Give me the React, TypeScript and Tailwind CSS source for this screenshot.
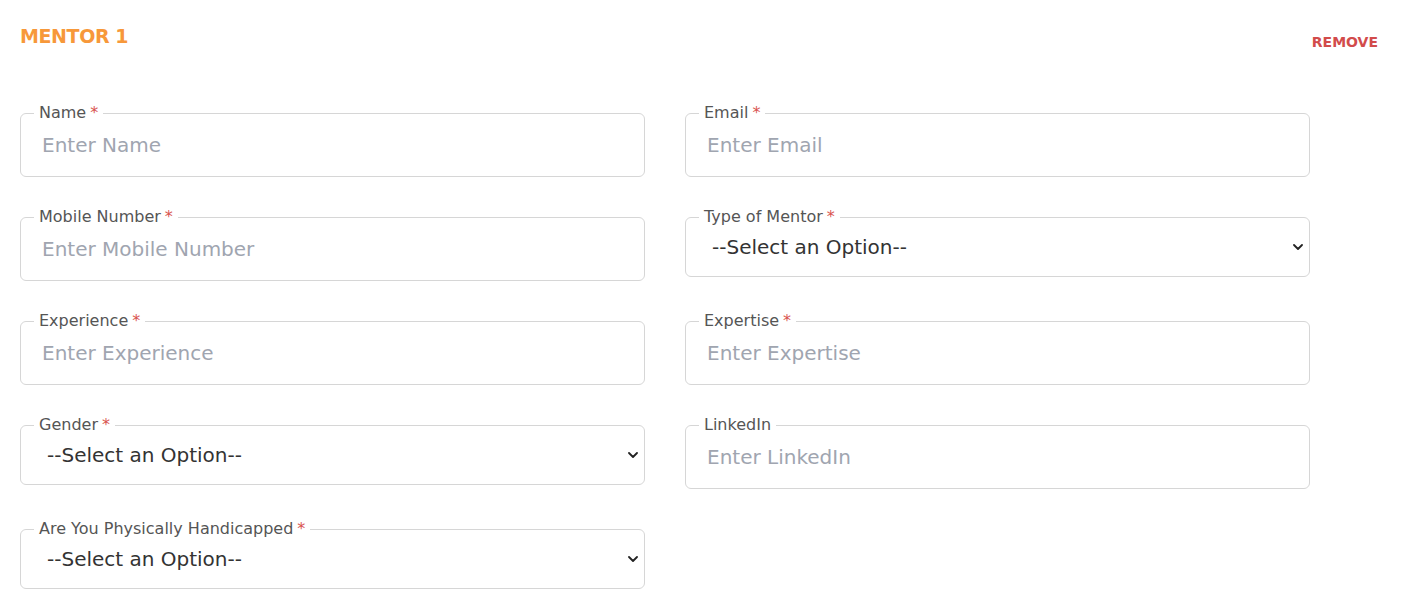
import React from 'react';

interface FieldProps {
  label: string;
  required?: boolean;
  placeholder?: string;
  select?: boolean;
}

const Chevron = () => (
  <svg
    viewBox="0 0 10 6"
    className="pointer-events-none absolute right-[-7px] top-1/2 h-[6px] w-[10px] -translate-y-1/2"
    fill="none"
    stroke="#222"
    strokeWidth="1.8"
    strokeLinecap="round"
    strokeLinejoin="round"
  >
    <path d="M1 1l4 4 4-4" />
  </svg>
);

const Field: React.FC<FieldProps> = ({ label, required = false, placeholder, select = false }) => {
  return (
    <fieldset className="rounded-[6px] border border-[#d6d6d6] px-[13px] pb-[8px]">
      <legend className="px-[5px] text-[16px] leading-[18px] text-[#555]">
        {label}
        {required && <span className="ml-[4px] text-[#d9534f]">*</span>}
      </legend>
      {select ? (
        <div className="relative">
          <select className="h-[42px] w-full appearance-none bg-transparent pl-[13px] text-[20px] text-[#333] outline-none">
            <option>--Select an Option--</option>
          </select>
          <Chevron />
        </div>
      ) : (
        <input
          className="h-[46px] w-full bg-transparent pl-[8px] text-[20px] text-[#333] outline-none placeholder:text-[#a0a5b0]"
          placeholder={placeholder}
        />
      )}
    </fieldset>
  );
};

export default function App() {
  return (
    <div
      className="relative min-h-[597px] overflow-hidden bg-white px-[20px] pt-[22px]"
      style={{ fontFamily: '"DejaVu Sans", sans-serif' }}
    >
      {/* Header */}
      <div className="flex items-start justify-between pr-[5px]">
        <h2 className="text-[19px] font-bold leading-[28px] tracking-[-0.4px] text-[#f7983a]">MENTOR 1</h2>
        <button className="mt-[10px] text-[14px] font-semibold leading-[20px] text-[#d24b4b]">REMOVE</button>
      </div>

      {/* Form */}
      <div className="mt-[52px] grid grid-cols-[625px_625px] items-start gap-x-[40px] gap-y-[31px]">
        <Field label="Name" required placeholder="Enter Name" />
        <Field label="Email" required placeholder="Enter Email" />
        <Field label="Mobile Number" required placeholder="Enter Mobile Number" />
        <Field label="Type of Mentor" required select />
        <Field label="Experience" required placeholder="Enter Experience" />
        <Field label="Expertise" required placeholder="Enter Expertise" />
        <Field label="Gender" required select />
        <Field label="LinkedIn" placeholder="Enter LinkedIn" />
        <Field label="Are You Physically Handicapped" required select />
      </div>
    </div>
  );
}
